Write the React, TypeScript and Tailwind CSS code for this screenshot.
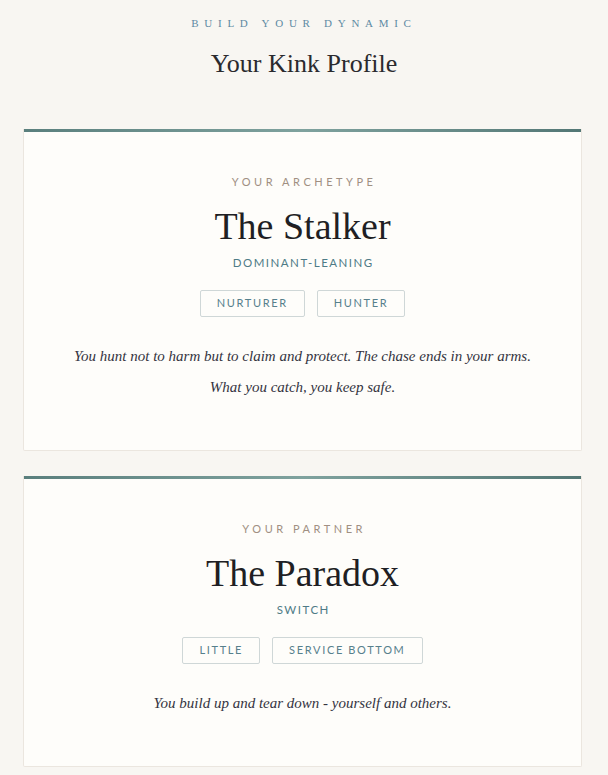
const serif = "font-['Liberation_Serif','Times_New_Roman',serif]";
const sans = "font-['Lato','Open_Sans',sans-serif]";

interface Profile {
  label: string;
  name: string;
  leaning: string;
  tags: string[];
  blurb: string;
}

const profiles: Profile[] = [
  {
    label: 'Your Archetype',
    name: 'The Stalker',
    leaning: 'Dominant-Leaning',
    tags: ['Nurturer', 'Hunter'],
    blurb:
      'You hunt not to harm but to claim and protect. The chase ends in your arms. What you catch, you keep safe.',
  },
  {
    label: 'Your Partner',
    name: 'The Paradox',
    leaning: 'Switch',
    tags: ['Little', 'Service Bottom'],
    blurb: 'You build up and tear down - yourself and others.',
  },
];

export default function App() {
  return (
    <div className="min-h-[775px] bg-[#f8f6f2] pb-[9px]">
      {/* header */}
      <div className="flex flex-col items-center pt-[15px]">
        <p className={`${serif} text-[11px] leading-[16px] uppercase tracking-[0.52em] text-[#5e8aa3]`}>
          Build your dynamic
        </p>
        <h1 className={`${serif} mt-[17px] text-[26px] leading-[32px] text-[#2a2a2e]`}>Your Kink Profile</h1>
      </div>

      <div className="mt-[49px] flex flex-col gap-[25px] ml-[23px] w-[559px]">
        {profiles.map((p) => (
          <ProfileCard key={p.name} profile={p} />
        ))}
      </div>
    </div>
  );
}

function ProfileCard({ profile }: { profile: Profile }) {
  return (
    <section className="bg-[#fefdfa] border border-t-0 border-[#ebe6df] rounded-b-[2px]">
      <div className="h-[3px] bg-[linear-gradient(90deg,#5a7f7d,#7fa29e_50%,#537775)]" />
      <div className="flex flex-col items-center pt-[42px] pb-[47px] px-6">
        <p className={`${sans} text-[11px] leading-[16px] uppercase tracking-[0.32em] text-[#a08f82] pl-[0.3em]`}>
          {profile.label}
        </p>
        <h2 className={`${serif} mt-[12px] text-[38px] leading-[48px] text-[#1f1f24]`}>{profile.name}</h2>
        <p className={`${sans} mt-[5px] text-[11.5px] leading-[16px] uppercase tracking-[0.13em] text-[#4e7b86] pl-[0.13em]`}>
          {profile.leaning}
        </p>
        <div className="mt-[19px] flex gap-3">
          {profile.tags.map((t) => (
            <span
              key={t}
              className={`${sans} h-[27px] flex items-center px-[16px] border border-[#cfd7d7] rounded-[2px] text-[11px] uppercase tracking-[0.15em] text-[#56808c]`}
            >
              {t}
            </span>
          ))}
        </div>
        <p className={`${serif} mt-[24px] max-w-[480px] text-center italic text-[15px] leading-[31px] text-[#34343f]`}>
          {profile.blurb}
        </p>
      </div>
    </section>
  );
}
